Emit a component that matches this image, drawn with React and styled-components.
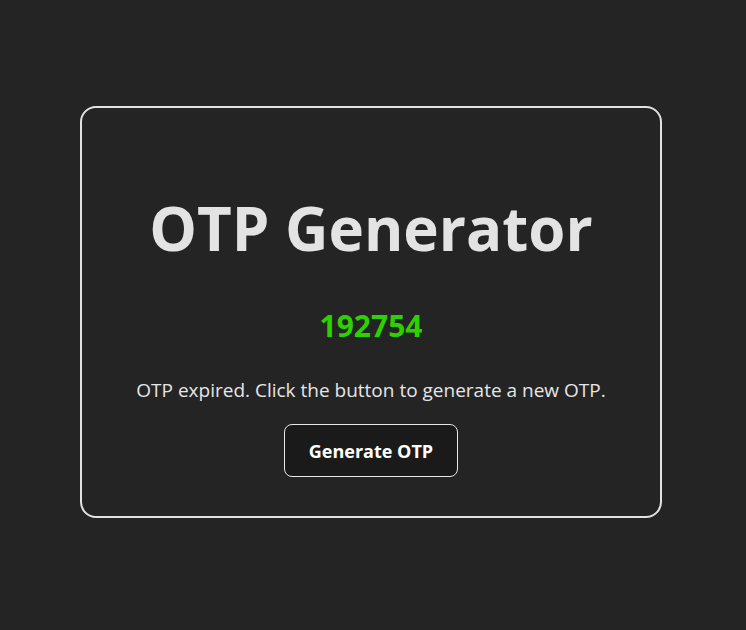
import React from "react";
import styled, { createGlobalStyle } from "styled-components";

const Global = createGlobalStyle`
  html, body { margin: 0; padding: 0; }
  body {
    background: #242424;
    color: rgba(255, 255, 255, 0.87);
    font-family: "Open Sans", "Noto Sans", sans-serif;
    -webkit-font-smoothing: antialiased;
  }
`;

const Page = styled.div`
  width: 746px;
  height: 630px;
  display: flex;
  align-items: center;
  justify-content: center;
`;

const Card = styled.div`
  box-sizing: border-box;
  width: 582px;
  height: 412px;
  margin-left: -4px;
  margin-top: -6px;
  border: 2px solid #e2e2e2;
  border-radius: 16px;
  display: flex;
  flex-direction: column;
  align-items: center;
  padding-top: 80px;
`;

const Title = styled.h1`
  margin: 0;
  font-size: 60px;
  font-weight: 700;
  line-height: 80px;
  color: #e3e3e3;
`;

const Code = styled.div`
  margin-top: 38px;
  font-size: 30px;
  font-weight: 700;
  line-height: 40px;
  color: #2ed100;
`;

const Message = styled.p`
  margin: 31px 0 0;
  font-size: 19px;
  line-height: 26px;
  color: #e6e6e6;
`;

const Button = styled.button`
  margin-top: 21px;
  box-sizing: border-box;
  height: 53px;
  padding: 0 24px;
  border-radius: 8px;
  border: 1px solid #e8e8e8;
  background: #1a1a1a;
  color: #ffffff;
  font-family: inherit;
  font-size: 18px;
  font-weight: 700;
  cursor: pointer;
`;

export default function App() {
  return (
    <>
      <Global />
      <Page>
        <Card>
          <Title>OTP Generator</Title>
          <Code>192754</Code>
          <Message>OTP expired. Click the button to generate a new OTP.</Message>
          <Button>Generate OTP</Button>
        </Card>
      </Page>
    </>
  );
}
